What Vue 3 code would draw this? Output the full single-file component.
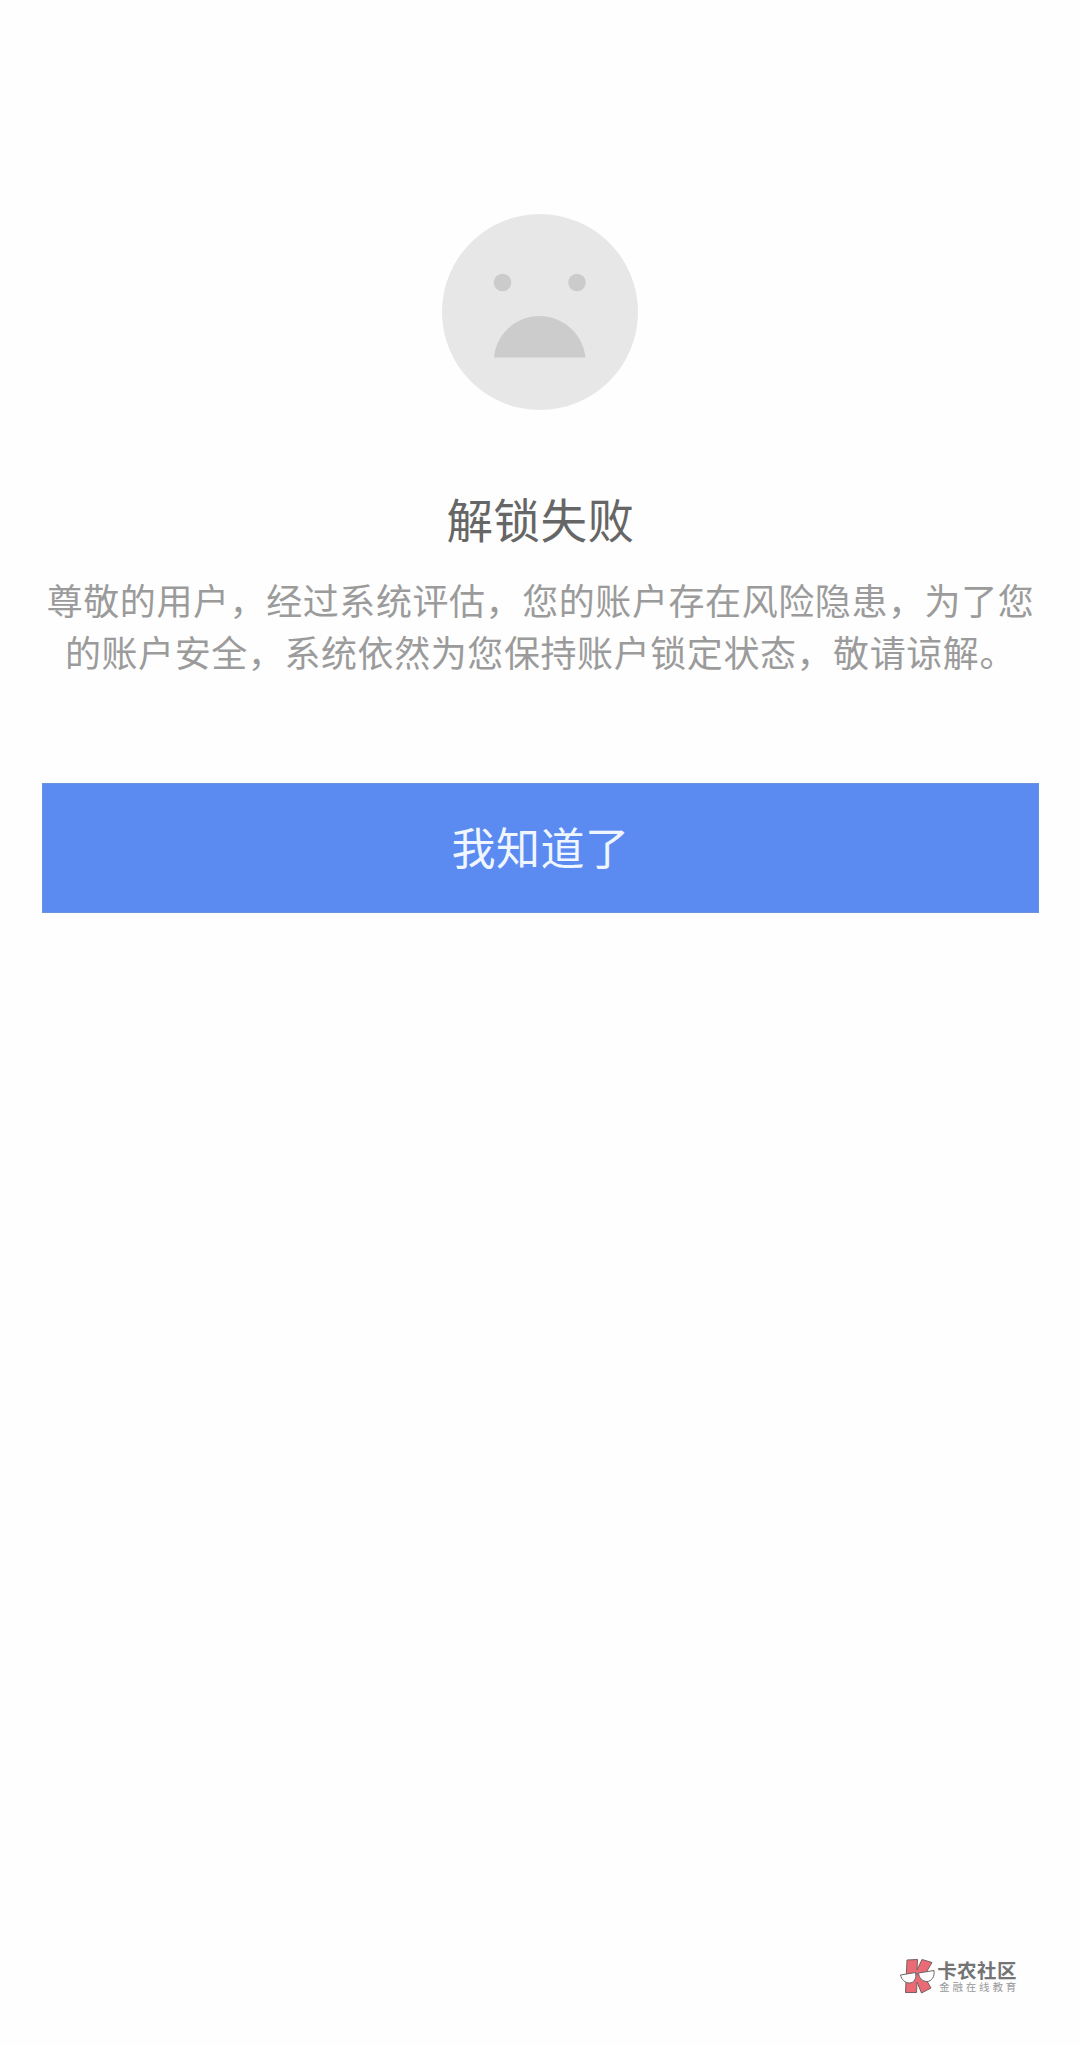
<script setup>
const title = '解锁失败'
const lines = [
    '尊敬的用户，经过系统评估，您的账户存在风险隐患，为了您',
    '的账户安全，系统依然为您保持账户锁定状态，敬请谅解。'
]
</script>

<template>
    <div class="page">
        <svg class="face" viewBox="0 0 196 196">
            <circle cx="98" cy="98" r="98" fill="#e7e7e7" />
            <circle cx="60.5" cy="68.5" r="8.8" fill="#cbcbcb" />
            <circle cx="135" cy="68.5" r="8.8" fill="#cbcbcb" />
            <path d="M52 143.5C54 120 74 102 97.500 102S141 120 143.500 143.500Z" fill="#cccccc" />
        </svg>

        <h1 class="title">{{ title }}</h1>
        <p class="message">
            <span v-for="line in lines" :key="line">{{ line }}</span>
        </p>

        <button class="confirm" type="button">我知道了</button>

        <div class="brand">
            <svg class="logo" viewBox="0 0 36 38">
                <path
                    d="M7 2L17.500 1.500L17 12L22 1.500L32 4.500L24 18L31 30L21.500 35L17 24L16.500 34.500H5.500Z"
                    fill="#ea6b76" stroke="#77605f" stroke-linejoin="round"
                />
                <g fill="#fff" stroke="#666" stroke-width="1">
                    <path d="M0.500 17L15.500 14.500C17 20 14 25 9.500 25C5 25 1.500 21.500 0.500 17Z" />
                    <path d="M18.500 15L34 12.500C35 18.500 31.500 23.500 27 23.500C22.500 23.500 19 20 18.500 15Z" />
                    <path d="M15.500 16.500Q17 15 18.500 16" fill="none" />
                </g>
            </svg>
            <div class="brand-text">
                <span class="brand-name">卡农社区</span>
                <span class="brand-sub">金融在线教育</span>
            </div>
        </div>
    </div>
</template>

<style>
body {
    margin: 0;
    background: #fefefe;
}
</style>

<style scoped>
.page {
    display: flex;
    flex-direction: column;
    align-items: center;
    box-sizing: border-box;
    width: 1080px;
    height: 2046px;
    padding: 214px 41px 50px 42px;
    background: #fefefe;
    font-family: "Noto Sans CJK SC", sans-serif;
}
.face {
    flex: none;
    width: 196px;
    height: 196px;
    margin-right: 1px;
}
.title {
    margin: 73px 0 0;
    font-size: 46.5px;
    letter-spacing: 0.5px;
    font-weight: 400;
    line-height: 70px;
    color: #666;
}
.message {
    display: flex;
    flex-direction: column;
    align-items: center;
    margin: 20px 0 0;
    font-size: 36px;
    letter-spacing: 0.58px;
    line-height: 52.4px;
    color: #9b9b9b;
    white-space: nowrap;
}
.confirm {
    flex: none;
    width: 997px;
    height: 130px;
    margin-top: 105px;
    padding: 0 0 3px;
    border: 1px solid #6b93dc;
    background: #5b8bf0;
    font-family: inherit;
    font-size: 44px;
    letter-spacing: 0.5px;
    color: #f0f6ff;
}
.brand {
    display: flex;
    align-items: center;
    align-self: flex-end;
    margin-top: auto;
    margin-right: 20px;
}
.logo {
    width: 36px;
    height: 38px;
}
.brand-text {
    display: flex;
    flex-direction: column;
    margin-left: 1px;
    padding-bottom: 2px;
}
.brand-name {
    font-size: 19.5px;
    letter-spacing: 0.4px;
    font-weight: 700;
    line-height: 21px;
    color: #747474;
}
.brand-sub {
    margin-left: 2px;
    font-size: 10.5px;
    letter-spacing: 2.8px;
    line-height: 13px;
    color: #999;
}
</style>
